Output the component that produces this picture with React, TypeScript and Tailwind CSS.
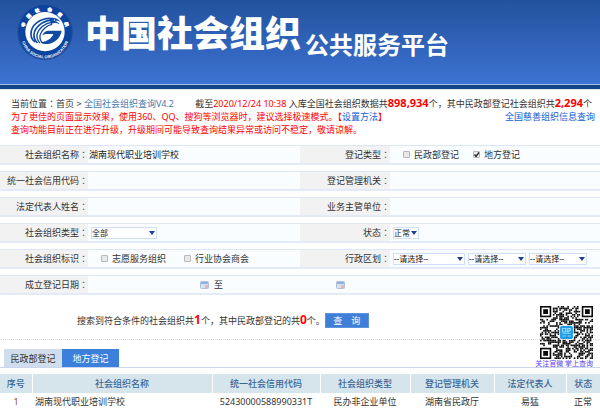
import type { ReactNode } from "react"

const QR_SIZE = 33

// finder squares in three corners, scattered modules elsewhere
function qrModules() {
  const cells: { x: number; y: number }[] = []
  let seed = 20201224
  for (let y = 0; y < QR_SIZE; y++) {
    for (let x = 0; x < QR_SIZE; x++) {
      seed = (seed * 1103515245 + 12345) % 2147483648
      const nearLeft = x < 8
      const nearRight = x > QR_SIZE - 9
      const nearTop = y < 8
      const nearBottom = y > QR_SIZE - 9
      if ((nearLeft && nearTop) || (nearRight && nearTop) || (nearLeft && nearBottom)) continue
      if (Math.floor(seed / 65536) % 100 < 54) cells.push({ x, y })
    }
  }
  return cells
}

function QrCode() {
  const finders = [
    [0, 0],
    [QR_SIZE - 7, 0],
    [0, QR_SIZE - 7],
  ]
  return (
    <svg viewBox={`0 0 ${QR_SIZE} ${QR_SIZE}`} className="block size-[53px]" aria-label="二维码">
      <rect width={QR_SIZE} height={QR_SIZE} fill="#fff" />
      {qrModules().map((c) => (
        <rect key={`${c.x}-${c.y}`} x={c.x} y={c.y} width="1" height="1" fill="#0a0a0a" />
      ))}
      {finders.map(([x, y]) => (
        <g key={`${x}-${y}`}>
          <rect x={x + 0.5} y={y + 0.5} width="6" height="6" fill="#fff" stroke="#0a0a0a" />
          <rect x={x + 2} y={y + 2} width="3" height="3" fill="#0a0a0a" />
        </g>
      ))}
      <rect x="12" y="12" width="9" height="9" rx="1" fill="#fff" />
      <rect x="12.5" y="12.5" width="8" height="8" rx="1" fill="#1c9be6" />
      <path
        d="M14 14h2v2h-2zM17 14h2v1h-1v1h-1zM14 17h5M14 18.7h2.2M17.2 18.7h2"
        fill="none"
        stroke="#8fd6f7"
        strokeWidth="0.7"
      />
    </svg>
  )
}

const SEAL_CHARS = [
  { char: "中", angle: -72 },
  { char: "国", angle: -46 },
  { char: "社", angle: -20 },
  { char: "会", angle: 12 },
  { char: "组", angle: 41 },
  { char: "织", angle: 71 },
]

function Logo() {
  return (
    <svg viewBox="0 0 168 168" className="size-14 shrink-0" aria-label="中国社会组织">
      <circle cx="84" cy="85" r="83" fill="#123a80" opacity="0.55" />
      <circle cx="84" cy="83" r="79" fill="#0b43a0" />
      <circle cx="84" cy="83" r="59" fill="#fff" />
      {SEAL_CHARS.map((s) => (
        <text
          key={s.char}
          x="84"
          y="20"
          textAnchor="middle"
          fontSize="13"
          fontWeight="900"
          fill="#fff"
          stroke="#fff"
          strokeWidth="1.5"
          transform={`rotate(${s.angle} 84 83)`}
        >
          {s.char}
        </text>
      ))}
      <path id="seal-arc" d="M11 90a73 73 0 0 0 146 0" fill="none" />
      <text fontSize="12" fontWeight="700" fill="#fff" fontFamily="Liberation Sans, Arial, sans-serif">
        <textPath href="#seal-arc" startOffset="50%" textAnchor="middle">
          CHINA SOCIAL ORGANIZATION
        </textPath>
      </text>
      <g fill="none" stroke="#0f4aa5" strokeLinecap="round">
        <path d="M99 43C70 43 42 62 42 90c0 10 4 18 11 23" strokeWidth="5" />
        <path d="M102 49C78 50 54 68 51 90c-1 11 2 19 9 25" strokeWidth="5" />
        <path d="M104 55C84 57 64 74 60 92c-1 10 2 18 8 24" strokeWidth="4" />
        <path d="M104 61C90 64 73 78 69 94c-1 9 1 16 7 22" strokeWidth="4" />
      </g>
      <path d="M97 42c14-3 26 1 33 11-6-3-11-3-16-1 6 1 11 4 14 9-9-5-18-5-26 0z" fill="#0f4aa5" />
      <path
        d="M134 80H96c-10 0-17 5-20 14 5-3 10-4 16-4h17c-4 12-16 22-38 25 5 5 13 6 22 5 21-3 37-18 41-40z"
        fill="#0f4aa5"
      />
      <circle cx="112" cy="48" r="2" fill="#fff" />
    </svg>
  )
}

function CalendarIcon() {
  return (
    <svg viewBox="0 0 9 8" className="block h-2 w-[9px]" aria-hidden="true">
      <rect x="0.500" y="0.500" width="8" height="7" rx="0.800" fill="#d5e2f5" stroke="#b3bfd4" />
      <rect x="1" y="1" width="7" height="2" fill="#8fb1e4" />
      <rect x="5" y="4" width="3" height="3" fill="#e6b9ac" />
    </svg>
  )
}

// the TC face centres the full-width colon in its box
function Colon() {
  return <span className="font-['Noto_Sans_CJK_TC',sans-serif]">：</span>
}

function Row({ children }: { children: ReactNode }) {
  return (
    <div className="flex border-t border-b-2 border-t-[#dbe6f7] border-b-[#e3ebf8] bg-[#f9fdff]">{children}</div>
  )
}

function Field({ label, id, children }: { label: string; id: string; children: ReactNode }) {
  return (
    <div className="group flex h-[17px] min-w-0 flex-1 items-center">
      <label
        htmlFor={id}
        className="flex h-full w-[90px] shrink-0 items-center justify-end bg-[#f2f2f2] whitespace-nowrap text-[#333] group-first:w-[88px]"
      >
        {label}
        <Colon />
      </label>
      {children}
    </div>
  )
}

function TextInput({ id, value }: { id: string; value?: string }) {
  return (
    <input
      id={id}
      type="text"
      defaultValue={value}
      className="h-full min-w-0 flex-1 bg-transparent pl-px text-[#222] outline-none"
    />
  )
}

function Check({ id, label, checked }: { id: string; label: string; checked?: boolean }) {
  return (
    <label htmlFor={id} className="flex items-center gap-1 whitespace-nowrap text-[#333]">
      <span className="relative block size-[7px]">
        <input
          id={id}
          type="checkbox"
          defaultChecked={checked}
          className="peer block size-[7px] appearance-none rounded-[1px] border border-[#b9b9b9] bg-[#e9e9e9]"
        />
        <svg
          viewBox="0 0 7 7"
          className="pointer-events-none absolute inset-0 hidden size-[7px] peer-checked:block"
          aria-hidden="true"
        >
          <path d="M1.500 3.500l1.500 2L6 1.500" fill="none" stroke="#222" strokeWidth="1.300" />
        </svg>
      </span>
      {label}
    </label>
  )
}

function Select({ id, value, width, label }: { id: string; value: string; width: string; label?: string }) {
  return (
    <span className={`relative block h-3 ${width}`}>
      <select
        id={id}
        aria-label={label}
        className="block h-3 w-full appearance-none border border-[#cfdff5] bg-white text-[8px] leading-[10px] text-[#222]"
      >
        <option>{value}</option>
      </select>
      <svg
        viewBox="0 0 6 4"
        className="pointer-events-none absolute top-1 right-0.5 h-1 w-1.5"
        aria-hidden="true"
      >
        <path d="M0 0h6L3 4z" fill="#1c3f94" />
      </svg>
    </span>
  )
}

const COLUMNS = [
  { title: "序号", width: "w-8" },
  { title: "社会组织名称", width: "" },
  { title: "统一社会信用代码", width: "w-[108px]" },
  { title: "社会组织类型", width: "w-[90px]" },
  { title: "登记管理机关", width: "w-[84px]" },
  { title: "法定代表人", width: "w-[72px]" },
  { title: "状态", width: "w-[34px]" },
]

export default function App() {
  return (
    <div className="bg-white font-['Noto_Sans','Noto_Sans_CJK_SC',sans-serif] text-[9px] leading-[13px] text-[#333]">
      <header className="flex h-[90px] items-start border-b border-[#dfe7f2] bg-[#0f4488]">
        <div className="flex h-[85px] w-full items-start border-b border-[#a5c0e6] bg-linear-to-b from-[#22529e] to-[#3d73d2] pt-1 pl-[17px] text-white">
          <Logo />
          <h1 className="flex items-start whitespace-nowrap">
            <span className="pl-3 text-[36px] leading-[60px] font-black">中国社会组织</span>
            <span className="pt-4 pl-1 text-[24px] leading-[50px] font-bold">公共服务平台</span>
          </h1>
        </div>
      </header>

      <div className="pt-1.5 pr-[5px] pb-[9px] pl-[11px]">
        <div className="flex h-[14px] items-center justify-between whitespace-nowrap">
          <nav>
            当前位置
            <Colon />
            <a href="#home">首页</a> &gt;{" "}
            <a href="#query" className="text-[#4779ab]">
              全国社会组织查询V4.2
            </a>
          </nav>
          <p className="pr-[3px]">
            截至<span className="text-[#f00]">2020/12/24 10:38</span> 入库全国社会组织数据共
            <b className="text-[11px] text-[#f00]">898,934</b>个，其中民政部登记社会组织共
            <b className="text-[11px] text-[#f00]">2,294</b>个
          </p>
        </div>
        <div className="flex justify-between whitespace-nowrap text-[#f00]">
          <p>
            为了更佳的页面显示效果，使用360、QQ、搜狗等浏览器时，建议选择极速模式。【
            <a href="#setup" className="text-[#1160d4]">
              设置方法
            </a>
            】
          </p>
          <a href="#charity" className="text-[#1160d4]">
            全国慈善组织信息查询
          </a>
        </div>
        <p className="text-[#f00]">查询功能目前正在进行升级，升级期间可能导致查询结果异常或访问不稳定，敬请谅解。</p>
      </div>

      <form onSubmit={(e) => e.preventDefault()}>
        <div className="flex flex-col gap-1.5">
          <Row>
            <Field label="社会组织名称" id="name">
              <TextInput id="name" value="湖南现代职业培训学校" />
            </Field>
            <Field label="登记类型" id="reg-ministry">
              <div className="flex gap-3.5 pl-[13px]">
                <Check id="reg-ministry" label="民政部登记" />
                <Check id="reg-local" label="地方登记" checked />
              </div>
            </Field>
          </Row>
          <Row>
            <Field label="统一社会信用代码" id="code">
              <TextInput id="code" />
            </Field>
            <Field label="登记管理机关" id="authority">
              <TextInput id="authority" />
            </Field>
          </Row>
          <Row>
            <Field label="法定代表人姓名" id="legal">
              <TextInput id="legal" />
            </Field>
            <Field label="业务主管单位" id="supervisor">
              <TextInput id="supervisor" />
            </Field>
          </Row>
          <Row>
            <Field label="社会组织类型" id="type">
              <div className="pl-[3px]">
                <Select id="type" value="全部" width="w-[66px]" />
              </div>
            </Field>
            <Field label="状态" id="status">
              <div className="pl-[3px]">
                <Select id="status" value="正常" width="w-[26px]" />
              </div>
            </Field>
          </Row>
          <Row>
            <Field label="社会组织标识" id="volunteer">
              <div className="flex gap-[18px] pl-[13px]">
                <Check id="volunteer" label="志愿服务组织" />
                <Check id="trade" label="行业协会商会" />
              </div>
            </Field>
            <Field label="行政区划" id="province">
              <div className="flex gap-[3px] pl-[3px]">
                <Select id="province" value="--请选择--" width="w-[72px]" />
                <Select id="city" value="--请选择--" width="w-[58px]" label="市" />
                <Select id="county" value="--请选择--" width="w-[58px]" label="县" />
              </div>
            </Field>
          </Row>
          <Row>
            <Field label="成立登记日期" id="date-from">
              <input id="date-from" type="text" className="h-full w-28 bg-transparent outline-none" />
              <button type="button" aria-label="选择开始日期">
                <CalendarIcon />
              </button>
              <label htmlFor="date-to" className="px-[5px]">
                至
              </label>
              <input id="date-to" type="text" className="h-full w-[108px] bg-transparent outline-none" />
              <button type="button" aria-label="选择结束日期">
                <CalendarIcon />
              </button>
            </Field>
          </Row>
        </div>

        <div className="relative">
          <div className="flex h-[45px] items-center border-b border-dotted border-[#d8d8d8] pt-1.5 pl-[77px] whitespace-nowrap">
            <p>
              搜索到符合条件的社会组织共<b className="text-[12px] text-[#f00]">1</b>个，其中民政部登记的共
              <b className="text-[12px] text-[#f00]">0</b>个。
            </p>
            <button type="submit" className="h-[15px] w-11 border border-[#5c93de] bg-[#3f7fd8] leading-none text-white">
              查&emsp;询
            </button>
          </div>
          <a
            href="#wechat"
            className="absolute top-[11px] right-[7px] flex flex-col items-end text-[7px] leading-[10px] text-[#5040f0]"
          >
            <QrCode />
            <span className="whitespace-nowrap">关注官微 掌上查询</span>
          </a>
        </div>
      </form>

      <div className="flex border-b border-[#cbd6ee] pt-[9px] pl-1">
        <button type="button" className="h-[18px] w-[58px] bg-[#d0ddec] text-[#333]">
          民政部登记
        </button>
        <button type="button" className="h-[18px] w-[57px] bg-[#3c80dc] text-white">
          地方登记
        </button>
      </div>

      <table className="mt-1.5 w-full table-fixed border-collapse text-center whitespace-nowrap">
        <thead>
          <tr className="h-[19px] bg-[#d6e5ec] text-[#3c6796]">
            {COLUMNS.map((c) => (
              <th key={c.title} className={`border-r border-white p-0 font-medium last:border-r-0 ${c.width}`}>
                {c.title}
              </th>
            ))}
          </tr>
        </thead>
        <tbody>
          <tr className="h-4">
            <td className="p-0 text-[#844]">1</td>
            <td className="p-0 pl-[3px] text-left">湖南现代职业培训学校</td>
            <td className="p-0">52430000588990331T</td>
            <td className="p-0">民办非企业单位</td>
            <td className="p-0">湖南省民政厅</td>
            <td className="p-0">易猛</td>
            <td className="p-0">正常</td>
          </tr>
        </tbody>
      </table>
    </div>
  )
}
